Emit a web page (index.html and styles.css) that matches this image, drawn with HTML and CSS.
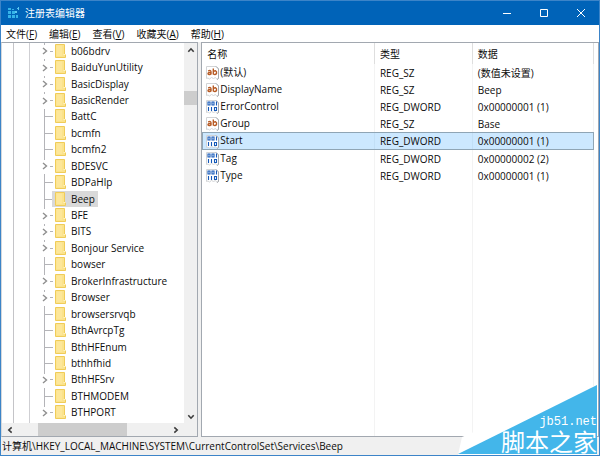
FILE: index.html
```html
<!DOCTYPE html>
<html lang="zh-CN">
<head>
<meta charset="utf-8">
<title>注册表编辑器</title>
<link rel="stylesheet" href="styles.css">
</head>
<body>
<svg class="defs" aria-hidden="true">
  <symbol id="folder" viewBox="0 0 12 14">
    <path d="M0.5 0.5H9.5V10.5H10.5V13.5H0.5Z" fill="#fbe38c" stroke="#f0cc58"/>
    <path d="M1.5 1.5H7V12H1.5Z" fill="#fde79a"/>
    <path d="M8.5 10.5H10.5" stroke="#fff3c4"/>
  </symbol>
  <symbol id="chevron" viewBox="0 0 6 8"><path d="M1 1L4.500 4L1 7" fill="none" stroke="#8f8f8f" stroke-width="1.4"/></symbol>
  <symbol id="arrow" viewBox="0 0 8 6"><path d="M1.3 4.7L4 1.8L6.7 4.7" fill="none" stroke="#3c3c3c" stroke-width="1.6"/></symbol>
  <symbol id="page" viewBox="0 0 13 14">
    <path d="M0.5 0.5H10.5L12.5 2.5V12.500L11 13.5L9.500 11.5L7.500 12.5L5.500 11.5L3.500 13L2 12L0.5 12.5Z" fill="#fff" stroke="#d2d4d6"/>
    <path d="M10 0.5L12.5 3V12.500L11 13.500" fill="none" stroke="#a5a8ac"/>
  </symbol>
  <symbol id="string" viewBox="0 0 13 14">
    <use href="#page" width="13" height="14"/>
    <path d="M2.2 5Q5 3.700 5 6V8.500M5 6.500Q2 6.300 2 7.800Q2.600 9.300 5 7.800M7.300 2.500V8.500M7.300 6Q8 4.500 9.600 4.800Q11 5.500 10.500 7.500Q9.300 9.300 7.300 8" fill="none" stroke="#b75a24" stroke-width="1.4"/>
  </symbol>
  <symbol id="binary" viewBox="0 0 13 14">
    <use href="#page" width="13" height="14"/>
    <path d="M2 2H4V5H2ZM6 2H8V5H6ZM10.500 1.500V5.500M2.500 7V11M5.500 7V11M8.500 7.500H10.500V10.500H8.500Z" fill="none" stroke="#1659b8" stroke-width="1.1"/>
  </symbol>
</svg>
<div class="window">
  <header class="titlebar">
    <svg class="app-icon" viewBox="0 0 12 12" aria-hidden="true">
      <path d="M0 1H3V3H0ZM0 4H3V7H0ZM4 4H7V7H4ZM0 8H3V11H0ZM4 8H7V11H4ZM8 8H10V11H8ZM4 2H6V3H4Z" fill="#35b3e8"/>
      <path d="M7 4H9V6H7ZM9 1H11V2H9ZM10 0H11V3H10Z" fill="#5cc8f0"/>
    </svg>
    <h1>注册表编辑器</h1>
    <div class="window-controls">
      <button aria-label="最小化"><svg viewBox="0 0 10 10"><path d="M1 5.500H9"/></svg></button>
      <button aria-label="最大化"><svg viewBox="0 0 10 10"><path d="M1.500 1.500H8.500V8.500H1.500Z"/></svg></button>
      <button aria-label="关闭"><svg viewBox="0 0 10 10"><path d="M1 1L9 9M9 1L1 9"/></svg></button>
    </div>
  </header>
  <nav class="menubar">
    <button>文件(<u>F</u>)</button>
    <button>编辑(<u>E</u>)</button>
    <button>查看(<u>V</u>)</button>
    <button>收藏夹(<u>A</u>)</button>
    <button>帮助(<u>H</u>)</button>
  </nav>
  <main class="panes">
    <section class="tree-pane">
      <ul class="tree">
        <li class="parent"><button aria-label="展开"><svg><use href="#chevron"/></svg></button><span class="node"><svg><use href="#folder"/></svg>b06bdrv</span></li>
        <li class="parent"><button aria-label="展开"><svg><use href="#chevron"/></svg></button><span class="node"><svg><use href="#folder"/></svg>BaiduYunUtility</span></li>
        <li class="parent"><button aria-label="展开"><svg><use href="#chevron"/></svg></button><span class="node"><svg><use href="#folder"/></svg>BasicDisplay</span></li>
        <li class="parent"><button aria-label="展开"><svg><use href="#chevron"/></svg></button><span class="node"><svg><use href="#folder"/></svg>BasicRender</span></li>
        <li><span class="node"><svg><use href="#folder"/></svg>BattC</span></li>
        <li><span class="node"><svg><use href="#folder"/></svg>bcmfn</span></li>
        <li><span class="node"><svg><use href="#folder"/></svg>bcmfn2</span></li>
        <li class="parent"><button aria-label="展开"><svg><use href="#chevron"/></svg></button><span class="node"><svg><use href="#folder"/></svg>BDESVC</span></li>
        <li><span class="node"><svg><use href="#folder"/></svg>BDPaHlp</span></li>
        <li><span class="node selected"><svg><use href="#folder"/></svg>Beep</span></li>
        <li class="parent"><button aria-label="展开"><svg><use href="#chevron"/></svg></button><span class="node"><svg><use href="#folder"/></svg>BFE</span></li>
        <li class="parent"><button aria-label="展开"><svg><use href="#chevron"/></svg></button><span class="node"><svg><use href="#folder"/></svg>BITS</span></li>
        <li class="parent"><button aria-label="展开"><svg><use href="#chevron"/></svg></button><span class="node"><svg><use href="#folder"/></svg>Bonjour Service</span></li>
        <li><span class="node"><svg><use href="#folder"/></svg>bowser</span></li>
        <li class="parent"><button aria-label="展开"><svg><use href="#chevron"/></svg></button><span class="node"><svg><use href="#folder"/></svg>BrokerInfrastructure</span></li>
        <li class="parent"><button aria-label="展开"><svg><use href="#chevron"/></svg></button><span class="node"><svg><use href="#folder"/></svg>Browser</span></li>
        <li><span class="node"><svg><use href="#folder"/></svg>browsersrvqb</span></li>
        <li><span class="node"><svg><use href="#folder"/></svg>BthAvrcpTg</span></li>
        <li><span class="node"><svg><use href="#folder"/></svg>BthHFEnum</span></li>
        <li><span class="node"><svg><use href="#folder"/></svg>bthhfhid</span></li>
        <li class="parent"><button aria-label="展开"><svg><use href="#chevron"/></svg></button><span class="node"><svg><use href="#folder"/></svg>BthHFSrv</span></li>
        <li><span class="node"><svg><use href="#folder"/></svg>BTHMODEM</span></li>
        <li class="parent"><button aria-label="展开"><svg><use href="#chevron"/></svg></button><span class="node"><svg><use href="#folder"/></svg>BTHPORT</span></li>
      </ul>
      <div class="vscroll">
        <button aria-label="向上滚动"><svg><use href="#arrow"/></svg></button>
        <div class="track"><span class="thumb"></span></div>
        <button class="down" aria-label="向下滚动"><svg><use href="#arrow"/></svg></button>
      </div>
      <div class="hscroll">
        <button class="left" aria-label="向左滚动"><svg><use href="#arrow"/></svg></button>
        <div class="track"><span class="thumb"></span></div>
        <button class="right" aria-label="向右滚动"><svg><use href="#arrow"/></svg></button>
      </div>
    </section>
    <section class="list-pane">
      <table>
        <colgroup><col class="c-name"><col class="c-type"><col class="c-data"></colgroup>
        <thead><tr><th>名称</th><th>类型</th><th>数据</th></tr></thead>
        <tbody>
          <tr><td><svg><use href="#string"/></svg>(默认)</td><td>REG_SZ</td><td>(数值未设置)</td></tr>
          <tr><td><svg><use href="#string"/></svg>DisplayName</td><td>REG_SZ</td><td>Beep</td></tr>
          <tr><td><svg><use href="#binary"/></svg>ErrorControl</td><td>REG_DWORD</td><td>0x00000001 (1)</td></tr>
          <tr><td><svg><use href="#string"/></svg>Group</td><td>REG_SZ</td><td>Base</td></tr>
          <tr class="selected"><td><svg><use href="#binary"/></svg>Start</td><td>REG_DWORD</td><td>0x00000001 (1)</td></tr>
          <tr><td><svg><use href="#binary"/></svg>Tag</td><td>REG_DWORD</td><td>0x00000002 (2)</td></tr>
          <tr><td><svg><use href="#binary"/></svg>Type</td><td>REG_DWORD</td><td>0x00000001 (1)</td></tr>
          <tr class="rest"><td></td><td></td><td></td></tr>
        </tbody>
      </table>
    </section>
  </main>
  <footer class="statusbar">计算机\HKEY_LOCAL_MACHINE\SYSTEM\CurrentControlSet\Services\Beep</footer>
  <div class="badge">
    <svg viewBox="0 0 141 70" aria-hidden="true"><path d="M0 70L4 52L80 20L139 0V70Z" fill="#fff"/><path d="M0 69L139 0V69Z" fill="#43b6ea"/></svg>
    <span class="badge-url">jb51.net</span>
    <span class="badge-name">脚本之家</span>
  </div>
</div>
</body>
</html>
```
FILE: styles.css
```css
* { box-sizing: border-box; }

body {
  margin: 0;
  font: 10px/14px "Open Sans", "Noto Sans CJK SC", sans-serif;
  color: #0c0c0c;
}

button {
  padding: 0;
  border: 0;
  background: none;
  font: inherit;
  color: inherit;
}

.defs { position: absolute; width: 0; height: 0; }

.window {
  position: relative;
  display: flex;
  flex-direction: column;
  height: 100vh;
  border: 1px solid #3c84c8;
  background: #f0f0f0;
}

.titlebar {
  display: flex;
  align-items: center;
  height: 24px;
  padding-left: 7px;
  background: #0063b8;
  color: #fff;
}
.app-icon { width: 12px; height: 12px; }
.titlebar h1 { margin: 0 0 0 5px; font-size: 10px; font-weight: 400; }
.window-controls { display: flex; margin-left: auto; }
.window-controls button { display: grid; place-items: center; width: 37px; height: 24px; }
.window-controls svg { width: 10px; height: 10px; fill: none; stroke: #fff; }

.menubar {
  display: flex;
  gap: 12px;
  height: 17px;
  padding: 0 5px;
  background: #fff;
}

.panes {
  flex: 1;
  display: flex;
  gap: 3px;
  min-height: 0;
}

.tree-pane {
  display: grid;
  grid-template: 1fr 13px / 1fr 13px;
  width: 33%;
  border: 1px solid #a2a8b0;
  border-left-color: #d5d8dc;
  background: #fff;
}

.tree {
  display: grid;
  grid-auto-rows: 1fr;
  min-height: 0;
  margin: 0;
  padding: 0 0 2px 42px;
  list-style: none;
  background:
    linear-gradient(#c4c4c8, #c4c4c8) 11px 0 / 1px 100% no-repeat,
    linear-gradient(#cfcfd3, #cfcfd3) 27px 0 / 1px 100% no-repeat;
}
.tree li {
  display: flex;
  align-items: center;
  min-height: 0;
  padding-left: 8px;
  background:
    linear-gradient(#b4b4b8, #b4b4b8) 0 0 / 1px 100% no-repeat,
    linear-gradient(#b4b4b8, #b4b4b8) 0 50% / 9px 1px no-repeat;
}
.tree .parent {
  padding-left: 0;
  background:
    linear-gradient(#b4b4b8, #b4b4b8) 0 0 / 1px 2px no-repeat,
    linear-gradient(#b4b4b8, #b4b4b8) 6px 50% / 3px 1px no-repeat;
}
.tree button { display: grid; width: 8px; margin-left: -2px; margin-right: 2px; }
.tree button svg { width: 6px; height: 8px; }
.node {
  display: flex;
  align-items: center;
  gap: 4px;
  height: 16px;
  padding: 0 3px 1px 3px;
  white-space: nowrap;
}
.node svg { width: 12px; height: 14px; }
.node.selected { background: #d9d9d9; }

.vscroll, .hscroll { display: flex; background: #f0f0f0; }
.vscroll { flex-direction: column; }
.hscroll { grid-column: 1 / -1; padding-right: 13px; }
.vscroll button, .hscroll button { display: grid; place-items: center; width: 13px; height: 13px; }
.vscroll svg, .hscroll svg { width: 8px; height: 6px; }
.vscroll .down svg { transform: rotate(180deg); }
.hscroll .left svg { transform: rotate(-90deg); }
.hscroll .right svg { transform: rotate(90deg); }
.hscroll button { width: 16px; }
.track { flex: 1; display: flex; }
.vscroll .track { flex-direction: column; padding-top: 35px; }
.hscroll .track { padding-left: 20px; }
.thumb { background: #cdcdcd; }
.vscroll .thumb { height: 14px; }
.hscroll .thumb { width: 68%; }

.list-pane {
  flex: 1;
  display: flex;
  padding-right: 4px;
  border: 1px solid #a2a8b0;
  background: #fff;
}
.list-pane table {
  flex: 1;
  height: 100%;
  table-layout: fixed;
  border-collapse: collapse;
}
.c-name { width: 44%; }
.c-type { width: 25%; }
.list-pane th, .list-pane td { padding: 0 0 0 5px; border-right: 1px solid #f3f3f3; text-align: left; }
.list-pane td:first-child { padding-left: 4px; }
.list-pane th { height: 21px; border-right-color: #dedede; font-weight: 400; }
.list-pane td { height: 17px; }
.list-pane td svg { width: 13px; height: 14px; margin-right: 1px; vertical-align: middle; }
.list-pane .selected td { height: 18px; background: #cce8ff; border-right-color: #c2dff6; }
.list-pane .selected { outline: 1px solid #8fa5b5; outline-offset: -1px; }
.list-pane .rest td { height: auto; }

.statusbar { height: 18px; padding: 2px 1px; white-space: nowrap; }

.badge {
  position: absolute;
  right: 0;
  bottom: 0;
  display: flex;
  flex-direction: column;
  justify-content: flex-end;
  align-items: flex-end;
  width: 141px;
  height: 70px;
  padding: 0 2px 2px 0;
  color: #fff;
}
.badge svg { position: absolute; inset: 0; width: 141px; height: 70px; }
.badge span { position: relative; }
.badge-url { font: 12px/14px "Liberation Mono", monospace; }
.badge-name { font: 24px/24px "Noto Sans CJK SC", sans-serif; }
```
